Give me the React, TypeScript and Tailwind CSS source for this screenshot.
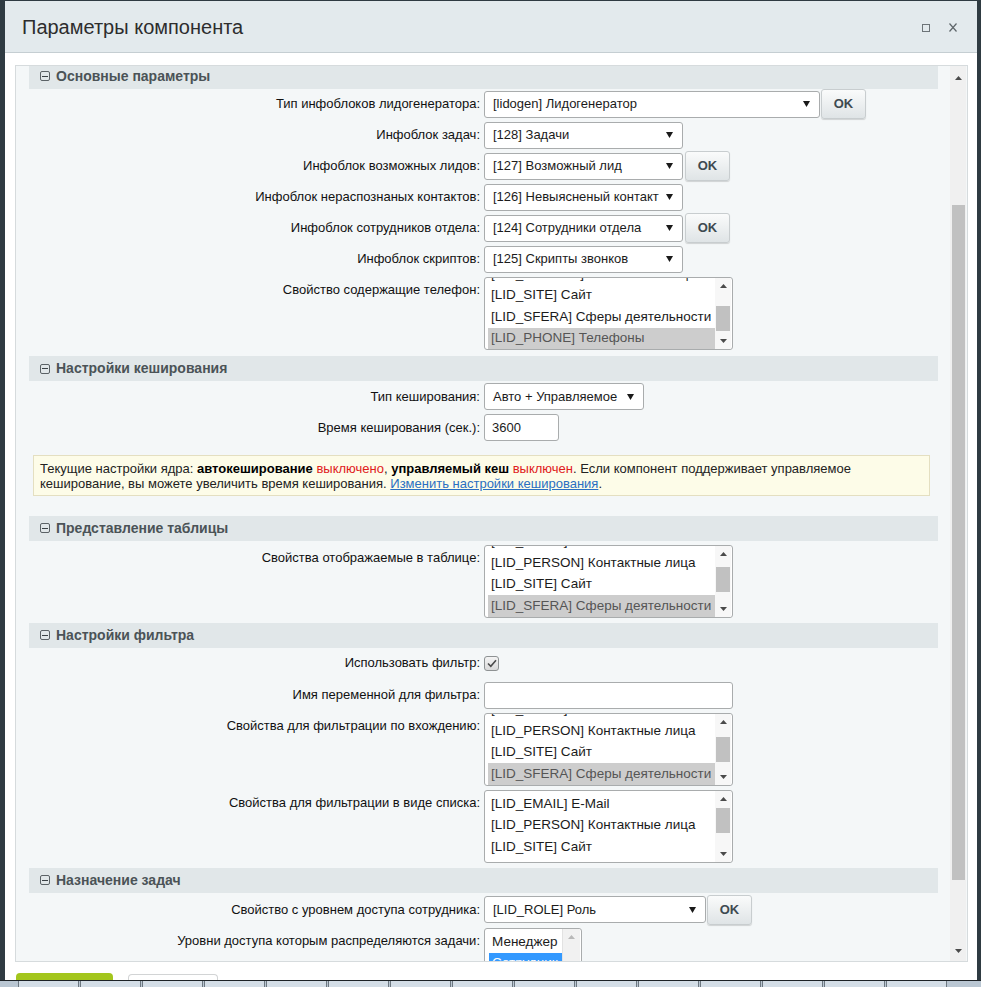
import React from 'react';

// dialog "Параметры компонента" — static mock of the component settings form

const Caret = () => (
  <svg width="7" height="6" viewBox="0 0 7 6" className="shrink-0">
    <path d="M0 0h7L3.5 6z" fill="#1a1a1a" />
  </svg>
);

const Tri = ({ up, light }: { up?: boolean; light?: boolean }) => (
  <svg width="7" height="4" viewBox="0 0 7 4">
    <path d={up ? 'M0 4h7L3.5 0z' : 'M0 0h7L3.5 4z'} fill={light ? '#b8b8b8' : '#4a4a4a'} />
  </svg>
);

function Select({ value, className }: { value: string; className: string }) {
  return (
    <div className={`h-[27px] bg-white border border-[#a9acad] rounded-[3px] flex items-center justify-between pl-[8px] pr-[9px] text-[13px] text-[#1b1b1b] ${className}`}>
      <span>{value}</span>
      <Caret />
    </div>
  );
}

function OkButton() {
  return (
    <div className="w-[45px] h-[30px] rounded-[3px] border border-[#c8cdcf] bg-gradient-to-b from-[#fafbfb] to-[#dfe4e6] shadow-[0_1px_1px_rgba(0,0,0,0.15)] flex items-center justify-center text-[13px] font-bold text-[#3e4a50]">
      OK
    </div>
  );
}

function ListBox({
  items,
  selected,
  shift,
  thumb,
}: {
  items: string[];
  selected?: number;
  shift: string;
  thumb: string;
}) {
  return (
    <div className="w-[249px] h-[73px] bg-white border border-[#a9acad] rounded-[3px] flex overflow-hidden">
      <div className="flex-1 overflow-hidden pl-[3px]">
        <div className={shift}>
          {items.map((it, i) => (
            <div
              key={i}
              className={`h-[21.5px] flex items-center pl-[3px] text-[13.5px] whitespace-nowrap ${
                i === selected ? 'bg-[#cdcdcd] text-[#555]' : 'text-[#1b1b1b]'
              }`}
            >
              {it}
            </div>
          ))}
        </div>
      </div>
      <div className="w-[16px] mr-[1px] flex flex-col items-center bg-[#f7f7f7]">
        <div className="h-[16px] flex items-center">
          <Tri up />
        </div>
        <div className="flex-1 w-full relative">
          <div className={`absolute left-[1px] right-[1px] h-[25px] bg-[#c1c1c1] ${thumb}`} />
        </div>
        <div className="h-[16px] flex items-center">
          <Tri />
        </div>
      </div>
    </div>
  );
}

function Row({ label, children }: { label: string; children: React.ReactNode }) {
  return (
    <div className="flex h-[31px] items-center">
      <div className="w-[451px] text-right text-[13px] text-[#111]">{label}</div>
      <div className="ml-[4px] flex items-center gap-[1px]">{children}</div>
    </div>
  );
}

function ListRow({ label, children, className }: { label: string; children: React.ReactNode; className: string }) {
  return (
    <div className={`flex ${className}`}>
      <div className="w-[451px] text-right text-[13px] text-[#111] pt-[3px]">{label}</div>
      <div className="ml-[4px]">{children}</div>
    </div>
  );
}

function SectionHead({ title }: { title: string }) {
  return (
    <div className="h-[25px] bg-[#e1e7e9] flex items-center pl-[11px] gap-[6px]">
      <div className="w-[10px] h-[10px] border border-[#5b6266] rounded-[2px] flex items-center justify-center">
        <div className="w-[6px] h-[1px] bg-[#3b4246]" />
      </div>
      <span className="text-[14px] font-bold text-[#4b5357]">{title}</span>
    </div>
  );
}

const props1 = ['[LID_PERSON] Контактные лица', '[LID_SITE] Сайт', '[LID_SFERA] Сферы деятельности', '[LID_PHONE] Телефоны'];
const props2 = ['[LID_EMAIL] E-Mail', '[LID_PERSON] Контактные лица', '[LID_SITE] Сайт', '[LID_SFERA] Сферы деятельности'];
const props3 = ['[LID_EMAIL] E-Mail', '[LID_PERSON] Контактные лица', '[LID_SITE] Сайт', '[LID_SFERA] Сферы деятельности'];

export default function App() {
  return (
    <div className="w-[981px] h-[987px] overflow-hidden bg-[#2f3b42] flex flex-col font-['Liberation_Sans',Arial,sans-serif]">
      <div className="flex h-[980px] pt-[1px]">
        <div className="w-[5px]" />
        <div className="w-[972px] flex flex-col bg-white">
          {/* header */}
          <div className="h-[52px] shrink-0 bg-[#e3eaed] border-b border-[#c5ced2] flex items-center justify-between pl-[17px] pr-[20px]">
            <span className="text-[20px] text-[#2d2d2d]">Параметры компонента</span>
            <div className="flex items-center gap-[19px] pt-[2px]">
              <div className="w-[8px] h-[8px] border border-[#6d7478]" />
              <svg width="8" height="9" viewBox="0 0 8 9">
                <path d="M0.5 0.5L7.5 8.5M7.5 0.5L0.5 8.5" stroke="#5e666a" strokeWidth="1.2" />
              </svg>
            </div>
          </div>

          {/* body */}
          <div className="flex-1 flex flex-col pt-[12px] pl-[10px] pr-[9px]">
            <div className="h-[897px] border border-[#d6dbdd] bg-[#f4f7f8] flex overflow-hidden">
              <div className="flex-1 overflow-hidden pl-[13px] pr-[12px]">
                <div className="-mt-[2.5px]">
                  <SectionHead title="Основные параметры" />
                  <Row label="Тип инфоблоков лидогенератора:">
                    <Select value="[lidogen] Лидогенератор" className="w-[336px]" />
                    <OkButton />
                  </Row>
                  <Row label="Инфоблок задач:">
                    <Select value="[128] Задачи" className="w-[199px]" />
                  </Row>
                  <Row label="Инфоблок возможных лидов:">
                    <Select value="[127] Возможный лид" className="w-[199px] mr-[1px]" />
                    <OkButton />
                  </Row>
                  <Row label="Инфоблок нераспознаных контактов:">
                    <Select value="[126] Невыясненый контакт" className="w-[199px]" />
                  </Row>
                  <Row label="Инфоблок сотрудников отдела:">
                    <Select value="[124] Сотрудники отдела" className="w-[199px] mr-[1px]" />
                    <OkButton />
                  </Row>
                  <Row label="Инфоблок скриптов:">
                    <Select value="[125] Скрипты звонков" className="w-[199px]" />
                  </Row>
                  <ListRow label="Свойство содержащие телефон:" className="pt-[2.5px] pb-[6px]">
                    <ListBox items={props1} selected={3} shift="-mt-[15px]" thumb="top-[12px]" />
                  </ListRow>

                  <SectionHead title="Настройки кеширования" />
                  <Row label="Тип кеширования:">
                    <Select value="Авто + Управляемое" className="w-[160px]" />
                  </Row>
                  <Row label="Время кеширования (сек.):">
                    <div className="w-[75px] h-[27px] bg-white border border-[#a9acad] rounded-[3px] flex items-center pl-[7px] text-[13px] text-[#1b1b1b]">
                      3600
                    </div>
                  </Row>
                  <div className="mt-[11.5px] mb-[20px] ml-[4px] mr-[8px] h-[41px] bg-[#fdfce8] border border-[#e4dfc1] pl-[6px] pt-[5px] text-[13px] leading-[15px] text-[#222]">
                    Текущие настройки ядра: <b className="text-black">автокеширование</b>{' '}
                    <span className="text-[#e0201b]">выключено</span>, <b className="text-black">управляемый кеш</b>{' '}
                    <span className="text-[#e0201b]">выключен</span>. Если компонент поддерживает управляемое
                    <br />
                    кеширование, вы можете увеличить время кеширования.{' '}
                    <span className="text-[#2a6fc2] underline">Изменить настройки кеширования</span>.
                  </div>

                  <SectionHead title="Представление таблицы" />
                  <ListRow label="Свойства отображаемые в таблице:" className="pt-[4px] pb-[5px]">
                    <ListBox items={props2} selected={3} shift="-mt-[15px]" thumb="top-[5px]" />
                  </ListRow>

                  <SectionHead title="Настройки фильтра" />
                  <Row label="Использовать фильтр:">
                    <div className="w-[15px] h-[15px] rounded-[3px] border border-[#8e9293] bg-gradient-to-b from-[#f4f4f4] to-[#d9d9d9] flex items-center justify-center">
                      <svg width="10" height="9" viewBox="0 0 10 9">
                        <path d="M1 4.5L3.8 7.3L9 1.2" fill="none" stroke="#4b4b4b" strokeWidth="1.6" />
                      </svg>
                    </div>
                  </Row>
                  <div className="pt-[1px]">
                    <Row label="Имя переменной для фильтра:">
                      <div className="w-[249px] h-[27px] bg-white border border-[#a9acad] rounded-[3px]" />
                    </Row>
                  </div>
                  <ListRow label="Свойства для фильтрации по вхождению:" className="pt-[2px] pb-[4px]">
                    <ListBox items={props2} selected={3} shift="-mt-[15px]" thumb="top-[7px]" />
                  </ListRow>
                  <ListRow label="Свойства для фильтрации в виде списка:" className="pb-[5px]">
                    <ListBox items={props3} shift="mt-[2.5px]" thumb="top-[1px]" />
                  </ListRow>

                  <SectionHead title="Назначение задач" />
                  <div className="pt-[1.5px]">
                    <Row label="Свойство с уровнем доступа сотрудника:">
                      <Select value="[LID_ROLE] Роль" className="w-[222px]" />
                      <OkButton />
                    </Row>
                  </div>
                  <ListRow label="Уровни доступа которым распределяются задачи:" className="pt-[2.5px]">
                    <div className="w-[98px] h-[73px] bg-white border border-[#a9acad] rounded-[3px] flex overflow-hidden">
                      <div className="flex-1 pl-[4px] pt-[2.5px]">
                        <div className="h-[21.5px] flex items-center pl-[3px] text-[13.5px] text-[#1b1b1b]">Менеджер</div>
                        <div className="h-[21.5px] flex items-center pl-[3px] text-[13.5px] text-white bg-[#3399ff]">Сотрудник</div>
                      </div>
                      <div className="w-[18px] mr-[1px] bg-[#f1f1f1] border-l border-[#e2e2e2] flex flex-col items-center">
                        <div className="h-[16px] flex items-center">
                          <Tri up light />
                        </div>
                      </div>
                    </div>
                  </ListRow>
                </div>
              </div>

              {/* outer scrollbar */}
              <div className="w-[16px] mr-[1px] bg-[#f0f0f0] flex flex-col items-center">
                <div className="h-[23px] flex items-center">
                  <Tri up />
                </div>
                <div className="h-[116px]" />
                <div className="w-[13px] h-[675px] bg-[#c1c1c1]" />
                <div className="flex-1" />
                <div className="h-[20px] flex items-center">
                  <Tri />
                </div>
              </div>
            </div>

            {/* footer buttons peeking under the panel */}
            <div className="flex-1 flex items-end pl-[1px] gap-[15px]">
              <div className="w-[97px] h-[7px] rounded-t-[4px] bg-[#a3c61d]" />
              <div className="w-[90px] h-[6px] rounded-t-[4px] border border-b-0 border-[#d2d4d5] bg-white" />
            </div>
          </div>
        </div>
        <div className="w-[4px]" />
      </div>

      {/* taskbar */}
      <div className="h-[7px] border-t border-[#1c2125] bg-[#b9c6d2] flex pl-[18px]">
        {Array.from({ length: 15 }).map((_, i) => (
          <div key={i} className="w-[61px] mr-[1px] bg-[#d3dde6] border-x border-[#6c7780]" />
        ))}
      </div>
    </div>
  );
}
